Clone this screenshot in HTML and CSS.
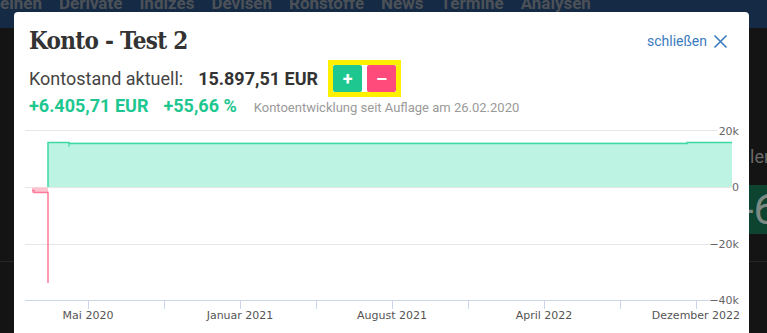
FILE: index.html
```html
<!DOCTYPE html>
<html lang="de">
<head>
  <meta charset="UTF-8">
  <meta name="viewport" content="width=device-width, initial-scale=1.0">
  <title>Konto - Test 2</title>
  <link rel="stylesheet" href="styles.css">
</head>
<body>

  <nav class="topnav">
    <a href="#">eihen</a>
    <a href="#">Derivate</a>
    <a href="#">Indizes</a>
    <a href="#">Devisen</a>
    <a href="#">Rohstoffe</a>
    <a href="#">News</a>
    <a href="#">Termine</a>
    <a href="#">Analysen</a>
  </nav>

  <div class="page">
    <div class="page-left"></div>
    <div class="page-right">
      <div class="side-text">ler</div>
      <div class="side-box">-6</div>
    </div>
  </div>

  <!-- Modal -->
  <div class="modal">
    <div class="modal-head">
      <h1>Konto - Test 2</h1>
      <a class="close" href="#">schließen
        <svg width="15" height="15" viewBox="0 0 15 15"><path d="M1.5 1.5 L13.5 13.5 M13.5 1.5 L1.5 13.5" stroke="#3b7bc0" stroke-width="1.6" fill="none"/></svg>
      </a>
    </div>

    <div class="balance">
      <span class="label">Kontostand aktuell:</span>
      <span class="amount">15.897,51 EUR</span>
      <div class="actions">
        <button class="plus">+</button>
        <button class="minus">–</button>
      </div>
    </div>

    <div class="perf">
      <span class="gain">+6.405,71 EUR</span>
      <span class="gain">+55,66 %</span>
      <span class="note">Kontoentwicklung seit Auflage am 26.02.2020</span>
    </div>

    <div class="chart">
      <svg width="735" height="213" viewBox="14 120 735 213">
        <!-- grid -->
        <path d="M25 130.5 H717 M25 187.5 H731 M25 244.5 H713" stroke="#e6e6e6" stroke-width="1"/>
        <!-- area positive -->
        <path d="M48 142 H69 V142.5 H732 V187 H48 Z" fill="#bcf3e2"/>
        <path d="M48 187 V142.5 H69 V143.5 H687 V142.5 H732" stroke="#3ed9a2" stroke-width="1.5" fill="none"/>
        <path d="M69 143 V147" stroke="#3ed9a2" stroke-width="1"/>
        <!-- area negative -->
        <path d="M32 187.5 H48 V193 H32 Z" fill="#ffc3d0"/>
        <path d="M32 190.5 H34 V192.5 H48 V283" stroke="#ff7b99" stroke-width="1.5" fill="none"/>
        <!-- x axis -->
        <path d="M25 300.5 H713" stroke="#ccd6eb" stroke-width="1"/>
        <path d="M88.5 300 V309 M164.5 300 V309 M240.5 300 V309 M316.5 300 V309 M392.5 300 V309 M468.5 300 V309 M544.5 300 V309 M620.5 300 V309 M696.5 300 V309" stroke="#ccd6eb" stroke-width="1"/>
        <g class="xlab" text-anchor="middle">
          <text x="88" y="319">Mai 2020</text>
          <text x="240" y="319">Januar 2021</text>
          <text x="392" y="319">August 2021</text>
          <text x="544" y="319">April 2022</text>
          <text x="696" y="319">Dezember 2022</text>
        </g>
        <g class="ylab" text-anchor="end">
          <text x="739" y="135">20k</text>
          <text x="739" y="191">0</text>
          <text x="739" y="248">−20k</text>
          <text x="739" y="304">−40k</text>
        </g>
      </svg>
    </div>
  </div>

</body>
</html>
```

FILE: styles.css
```css
* { margin: 0; padding: 0; box-sizing: border-box; }
html, body { height: 100%; }
body {
  background: #141414;
  font-family: Roboto, "Liberation Sans", sans-serif;
  overflow: hidden;
}

/* Top navigation, mostly hidden behind the modal */
.topnav {
  display: flex; gap: 17px;
  height: 28px; background: #152a44;
  overflow: hidden;
}
.topnav a {
  color: #4c5157; text-decoration: none;
  font-weight: bold; font-size: 17px; line-height: 17px;
  margin-top: -5px;
}

/* Page behind */
.page { display: flex; height: 305px; }
.page-left { width: 748px; border-bottom: 1px solid #262626; height: 234px; }
.page-right {
  flex: 1; border-bottom: 1px solid #262626; height: 234px;
  overflow: hidden;
}
.side-text {
  color: #6a6a6a; font-size: 18px; line-height: 20px;
  margin-top: 119px; margin-left: 2px;
}
.side-box {
  background: #0c4430; color: #7d8a84;
  height: 49px; margin-top: 18px;
  font-size: 42px; line-height: 49px;
  margin-left: 1px; text-indent: -7px;
}

/* Modal */
.modal {
  position: absolute; top: 12px; left: 14px;
  width: 735px; height: 340px;
  background: white; border-radius: 4px;
}
.modal-head {
  display: flex; justify-content: space-between; align-items: center;
  padding: 15px 21px 0 15px;
  height: 43px;
}
.modal-head h1 {
  font-family: "Roboto Slab", "DejaVu Serif Condensed", "DejaVu Serif", serif;
  font-stretch: condensed;
  font-size: 24px; line-height: 28px; color: #333;
  letter-spacing: -0.7px;
}
.close {
  display: flex; align-items: center; gap: 6px;
  color: #3b7bc0; text-decoration: none; font-size: 14px;
}

.balance {
  display: flex; align-items: center;
  padding-left: 15px; margin-top: 5px; height: 37px;
  font-size: 18px; color: #444;
}
.balance .amount { font-weight: bold; color: #333; margin-left: 15px; }
.actions {
  display: flex; gap: 5px;
  margin-left: 10px;
  border: 5px solid #fff000; background: white;
}
.actions button {
  width: 29px; height: 27px; border: none; border-radius: 2px;
  color: white; font-size: 18px; font-weight: bold;
  font-family: Roboto, sans-serif;
}
.actions .plus { background: #1ec78f; }
.actions .minus { background: #ff4b7b; }

.perf {
  display: flex; align-items: baseline; gap: 15px;
  padding-left: 15px; height: 18px; line-height: 18px;
}
.perf .gain { color: #1ec78f; font-weight: bold; font-size: 18px; }
.perf .note { color: #9a9a9a; font-size: 13px; margin-left: 2px; }

.chart { margin-top: 5px; height: 213px; }
.chart svg { display: block; }
.chart text {
  font-family: "DejaVu Sans", sans-serif; font-size: 11px; fill: #666;
}
.chart .xlab text { fill: #555; }
```
